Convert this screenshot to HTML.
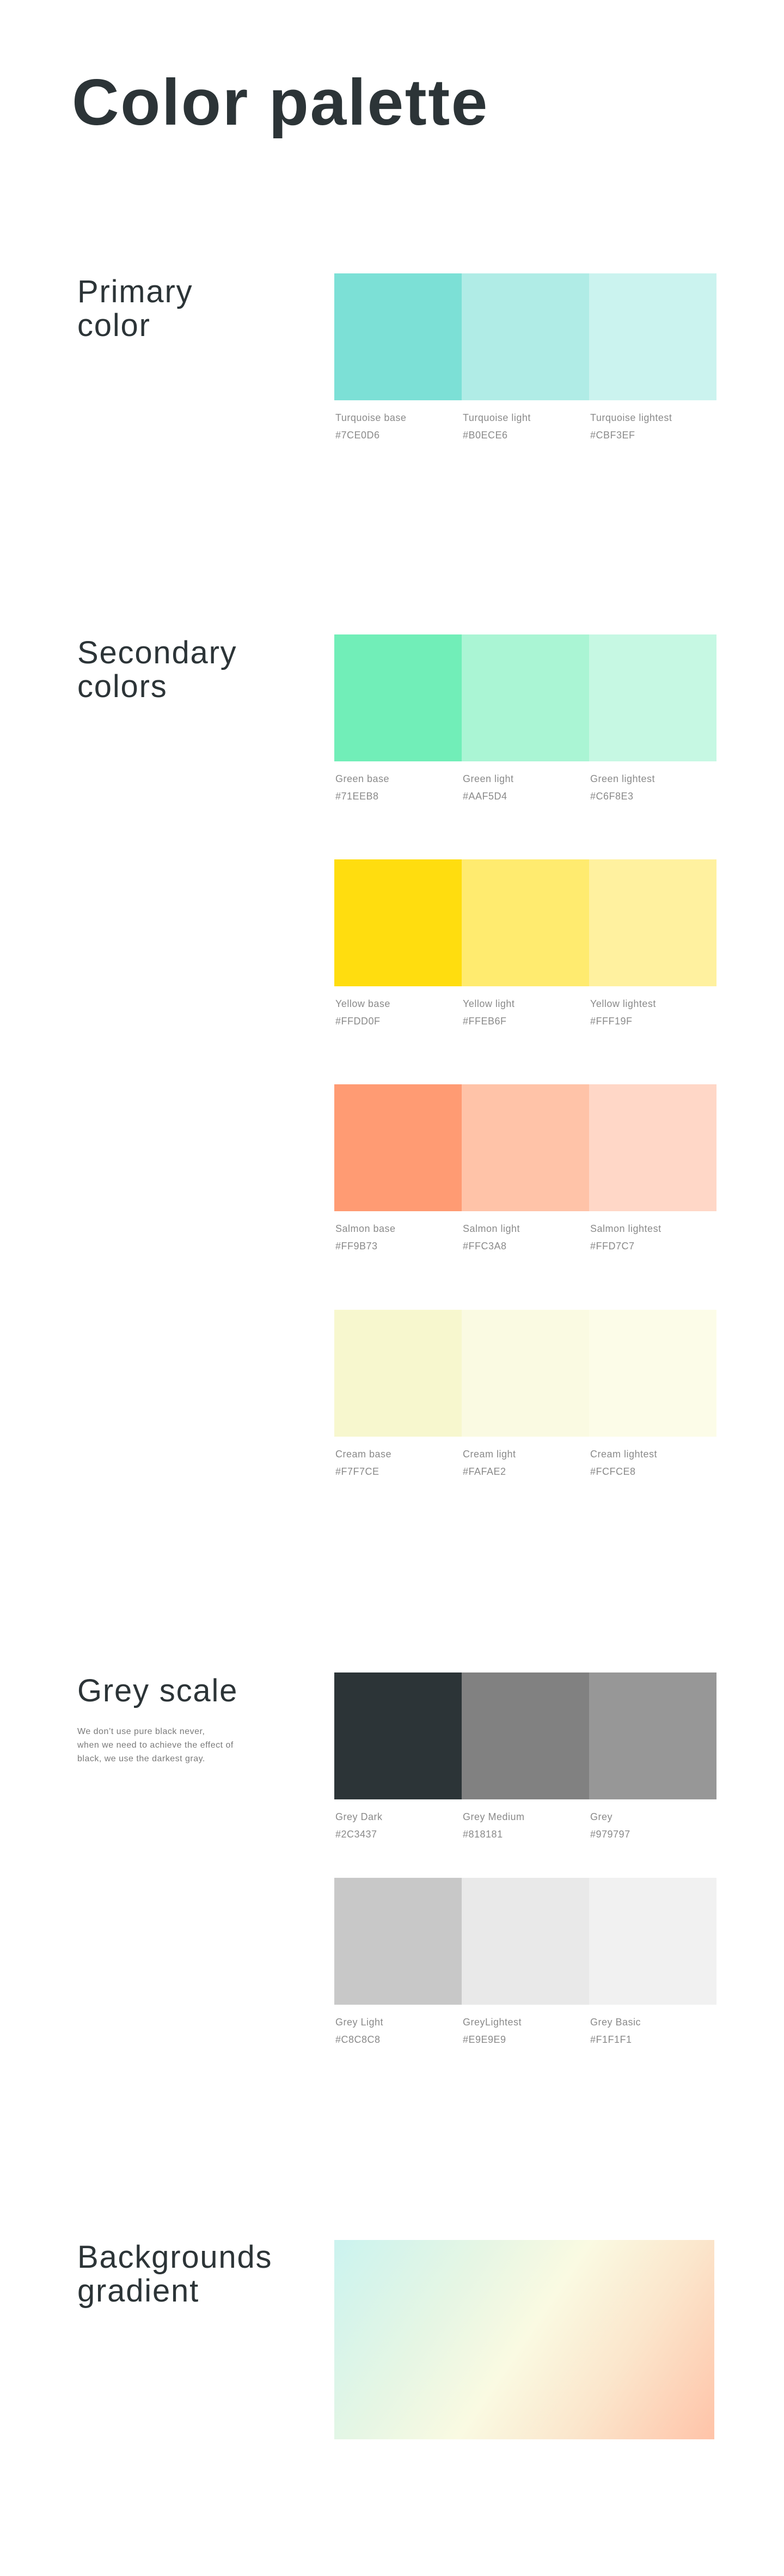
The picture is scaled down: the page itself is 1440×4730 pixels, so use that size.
<!DOCTYPE html>
<html><head><meta charset="utf-8">
<style>
*{margin:0;padding:0;box-sizing:border-box}
html,body{width:1440px;height:4730px;background:#fff;overflow:hidden}
body{position:relative;font-family:"Liberation Sans",sans-serif;color:#2c3437}
.title{position:absolute;left:132px;top:128px;font-size:120px;line-height:120px;font-weight:700;letter-spacing:2.5px;color:#2c3437}
.h{position:absolute;left:142px;font-size:58px;line-height:62px;color:#2c3437;letter-spacing:1.8px}
.desc{position:absolute;left:142px;font-size:16px;line-height:25px;color:#7a7a7a;letter-spacing:.5px}
.row{position:absolute;left:614px;width:702px;height:233px;display:flex}
.row div{width:234px;height:233px;position:relative}
.row span{position:absolute;left:2px;top:249px;font-size:18px;line-height:32px;color:#8a8a8a;white-space:nowrap;letter-spacing:.5px}
.grad{position:absolute;left:614px;top:4113px;width:698px;height:366px;background:linear-gradient(124deg,#cbf3ef 0%,#e6f6e4 30%,#fafae2 50%,#fbe6cc 72%,#ffc3a8 100%)}
</style></head><body>
<div class="title">Color palette</div>

<div class="h" style="top:505px">Primary<br>color</div>
<div class="row" style="top:502px">
<div style="background:#7ce0d6"><span>Turquoise base<br>#7CE0D6</span></div>
<div style="background:#b0ece6"><span>Turquoise light<br>#B0ECE6</span></div>
<div style="background:#cbf3ef"><span>Turquoise lightest<br>#CBF3EF</span></div>
</div>

<div class="h" style="top:1168px">Secondary<br>colors</div>
<div class="row" style="top:1165px">
<div style="background:#71eeb8"><span>Green base<br>#71EEB8</span></div>
<div style="background:#aaf5d4"><span>Green light<br>#AAF5D4</span></div>
<div style="background:#c6f8e3"><span>Green lightest<br>#C6F8E3</span></div>
</div>
<div class="row" style="top:1578px">
<div style="background:#ffdd0f"><span>Yellow base<br>#FFDD0F</span></div>
<div style="background:#ffeb6f"><span>Yellow light<br>#FFEB6F</span></div>
<div style="background:#fff19f"><span>Yellow lightest<br>#FFF19F</span></div>
</div>
<div class="row" style="top:1991px">
<div style="background:#ff9b73"><span>Salmon base<br>#FF9B73</span></div>
<div style="background:#ffc3a8"><span>Salmon light<br>#FFC3A8</span></div>
<div style="background:#ffd7c7"><span>Salmon lightest<br>#FFD7C7</span></div>
</div>
<div class="row" style="top:2405px">
<div style="background:#f7f7ce"><span>Cream base<br>#F7F7CE</span></div>
<div style="background:#fafae2"><span>Cream light<br>#FAFAE2</span></div>
<div style="background:#fcfce8"><span>Cream lightest<br>#FCFCE8</span></div>
</div>

<div class="h" style="top:3074px">Grey scale</div>
<div class="desc" style="top:3167px">We don’t use pure black never,<br>when we need to achieve the effect of<br>black, we use the darkest gray.</div>
<div class="row" style="top:3071px">
<div style="background:#2c3437"><span>Grey Dark<br>#2C3437</span></div>
<div style="background:#818181"><span>Grey Medium<br>#818181</span></div>
<div style="background:#979797"><span>Grey<br>#979797</span></div>
</div>
<div class="row" style="top:3448px">
<div style="background:#c8c8c8"><span>Grey Light<br>#C8C8C8</span></div>
<div style="background:#e9e9e9"><span>GreyLightest<br>#E9E9E9</span></div>
<div style="background:#f1f1f1"><span>Grey Basic<br>#F1F1F1</span></div>
</div>

<div class="h" style="top:4114px">Backgrounds<br>gradient</div>
<div class="grad"></div>
</body></html>
